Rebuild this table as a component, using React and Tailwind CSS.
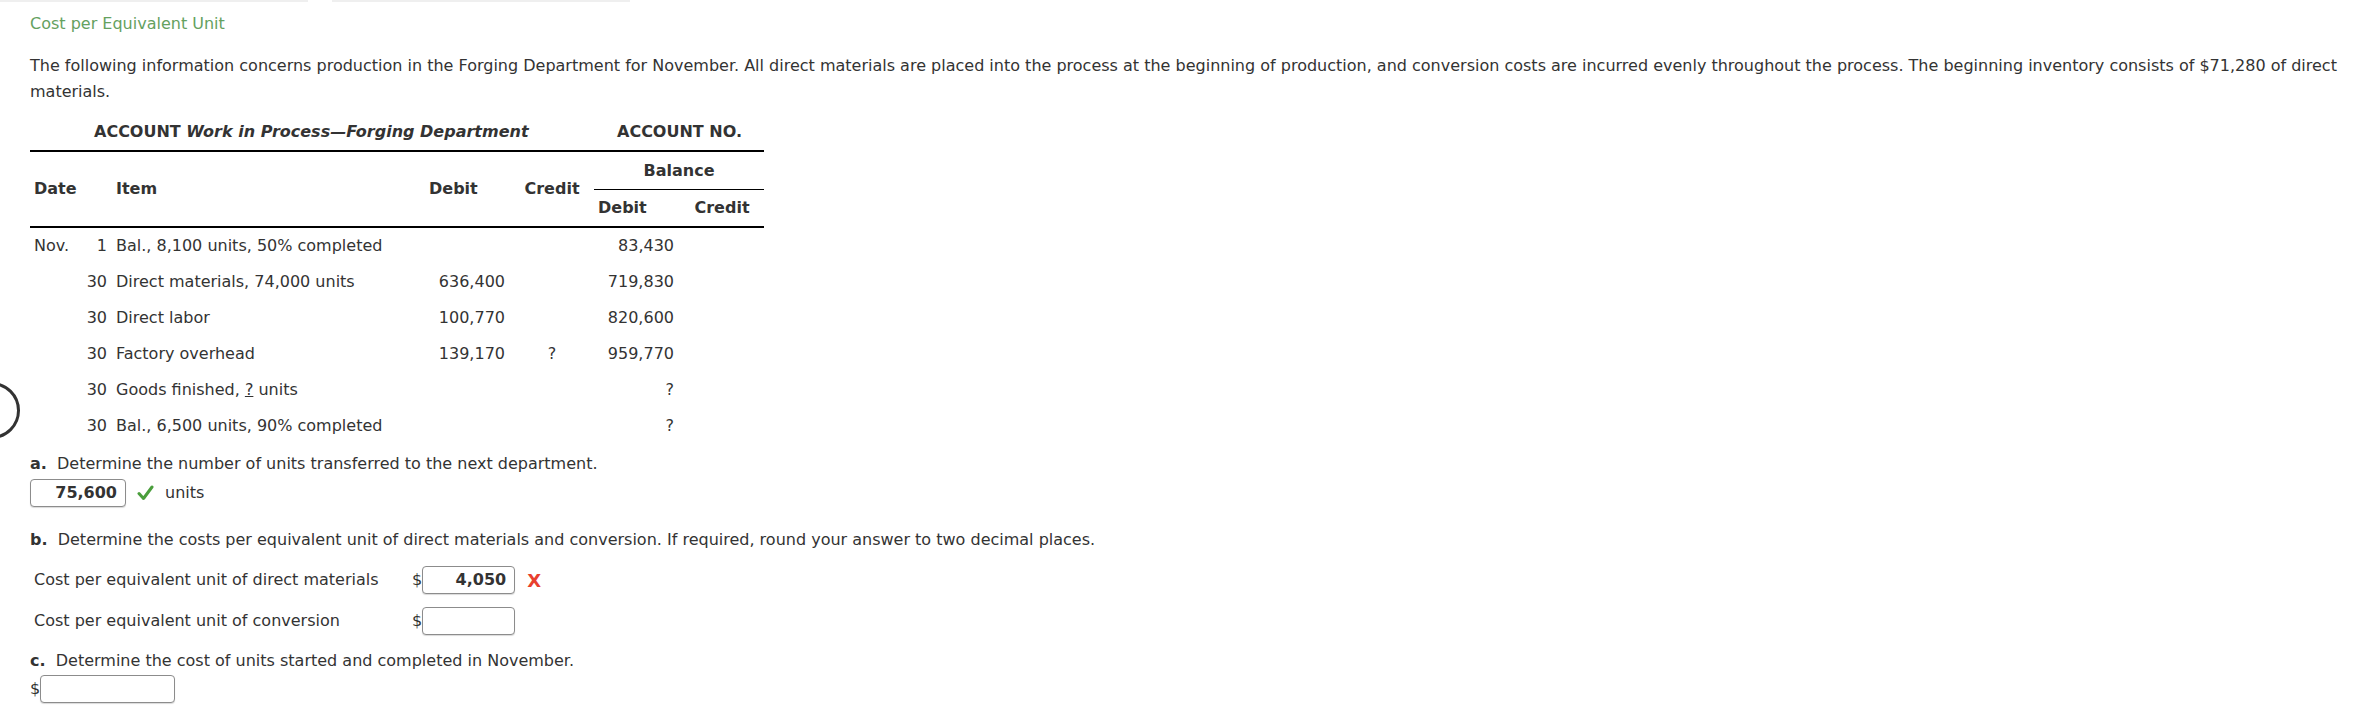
const rows = [
  { month: 'Nov.', day: '1', item: 'Bal., 8,100 units, 50% completed', debit: '', credit: '', bal: '83,430' },
  { month: '', day: '30', item: 'Direct materials, 74,000 units', debit: '636,400', credit: '', bal: '719,830' },
  { month: '', day: '30', item: 'Direct labor', debit: '100,770', credit: '', bal: '820,600' },
  { month: '', day: '30', item: 'Factory overhead', debit: '139,170', credit: '?', bal: '959,770' },
  { month: '', day: '30', item: 'goods', debit: '', credit: '', bal: '?' },
  { month: '', day: '30', item: 'Bal., 6,500 units, 90% completed', debit: '', credit: '', bal: '?' },
];

const Box = ({ value, className = '' }) => (
  <div
    className={`h-[28px] border border-[#8c8c8c] rounded-[4px] shadow-[0_1px_1px_rgba(0,0,0,0.15)] bg-white flex items-center justify-end pr-2 font-bold text-[#333] ${className}`}
  >
    {value}
  </div>
);

export default function App() {
  return (
    <div
      className="relative w-[2376px] h-[718px] bg-white text-[#333] text-[16px] overflow-hidden"
      style={{ fontFamily: '"DejaVu Sans", Verdana, sans-serif' }}
    >
      {/* faint tab remnants on top edge */}
      <div className="flex h-[2px]">
        <div className="w-[308px] bg-[#efefef]" />
        <div className="w-[24px]" />
        <div className="w-[298px] bg-[#efefef]" />
      </div>

      {/* floating circle at left edge */}
      <div className="absolute left-[-37px] top-[382px] w-[57px] h-[57px] rounded-full border-[3px] border-[#333]" />

      <div className="pl-[30px] pr-[20px]">
        <div className="mt-[10px] leading-[24px] text-[#65a15f]">Cost per Equivalent Unit</div>

        <p className="mt-[17px] leading-[26px]">
          The following information concerns production in the Forging Department for November. All direct materials are
          placed into the process at the beginning of production, and conversion costs are incurred evenly throughout the
          process. The beginning inventory consists of $71,280 of direct materials.
        </p>

        {/* ledger */}
        <div className="w-[734px] mt-[15px]">
          <div className="flex leading-[24px] font-bold pl-[64px] mb-[6px]">
            <span className="w-[523px] shrink-0">
              ACCOUNT <span className="italic">Work in Process—Forging Department</span>
            </span>
            <span>ACCOUNT NO.</span>
          </div>

          <div className="flex border-t-2 border-b-2 border-black font-bold">
            <div className="w-[81px] shrink-0 pl-[4px] flex items-center">Date</div>
            <div className="w-[314px] shrink-0 pl-[5px] flex items-center">Item</div>
            <div className="w-[85px] shrink-0 pl-[4px] flex items-center">Debit</div>
            <div className="w-[84px] shrink-0 flex items-center justify-center">Credit</div>
            <div className="w-[170px] shrink-0 flex flex-col">
              <div className="h-[38px] border-b border-black flex items-center justify-center">Balance</div>
              <div className="h-[36px] flex">
                <div className="w-[86px] pl-[4px] flex items-center">Debit</div>
                <div className="w-[84px] flex items-center justify-center">Credit</div>
              </div>
            </div>
          </div>

          {rows.map((r, i) => (
            <div key={i} className="flex h-[36px] items-center">
              <div className="w-[51px] shrink-0 pl-[4px]">{r.month}</div>
              <div className="w-[30px] shrink-0 text-right pr-[4px]">{r.day}</div>
              <div className="w-[314px] shrink-0 pl-[5px]">
                {r.item === 'goods' ? (
                  <>
                    Goods finished, <span className="underline">?</span> units
                  </>
                ) : (
                  r.item
                )}
              </div>
              <div className="w-[85px] shrink-0 text-right pr-[5px]">{r.debit}</div>
              <div className="w-[84px] shrink-0 text-center">{r.credit}</div>
              <div className="w-[86px] shrink-0 text-right pr-[6px]">{r.bal}</div>
              <div className="w-[84px] shrink-0" />
            </div>
          ))}
        </div>

        {/* part a */}
        <div className="mt-[8px] leading-[24px]">
          <span className="font-bold">a.</span>&nbsp; Determine the number of units transferred to the next department.
        </div>
        <div className="flex items-center mt-[3px]">
          <Box value="75,600" className="w-[96px]" />
          <svg className="ml-[11px]" width="17" height="16" viewBox="0 0 17 16">
            <path d="M2 8.5 L6.5 13.5 L15 2" fill="none" stroke="#4a9e3c" strokeWidth="3" strokeLinecap="round" strokeLinejoin="round" />
          </svg>
          <span className="ml-[11px]">units</span>
        </div>

        {/* part b */}
        <div className="mt-[21px] leading-[24px]">
          <span className="font-bold">b.</span>&nbsp; Determine the costs per equivalent unit of direct materials and conversion. If required, round
          your answer to two decimal places.
        </div>
        <div className="flex items-center mt-[14px] pl-[4px]">
          <span className="w-[378px]">Cost per equivalent unit of direct materials</span>
          <span>$</span>
          <Box value="4,050" className="w-[93px]" />
          <span className="ml-[12px] text-[#e8402e] font-bold text-[18px]">X</span>
        </div>
        <div className="flex items-center mt-[13px] pl-[4px]">
          <span className="w-[378px]">Cost per equivalent unit of conversion</span>
          <span>$</span>
          <Box value="" className="w-[93px]" />
        </div>

        {/* part c */}
        <div className="mt-[14px] leading-[24px]">
          <span className="font-bold">c.</span>&nbsp; Determine the cost of units started and completed in November.
        </div>
        <div className="flex items-center mt-[2px]">
          <span>$</span>
          <Box value="" className="w-[135px]" />
        </div>
      </div>
    </div>
  );
}
